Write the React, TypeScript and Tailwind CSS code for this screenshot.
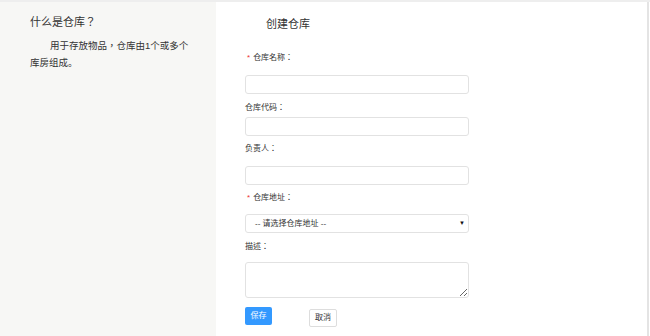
const font = { fontFamily: '"Liberation Sans", "Noto Sans CJK TC", "Noto Sans CJK SC", sans-serif' }

function Label({ text, required }: { text: string; required?: boolean }) {
  return (
    <div className="h-[12px] leading-[12px] text-[8px] text-[#333] flex items-center">
      {required && <span className="text-[#e33] text-[8px] pl-[2px] pr-[3px]">*</span>}
      <span>{text}</span>
    </div>
  )
}

export default function App() {
  return (
    <div style={font} className="w-[650px] h-[336px] bg-white border-t-2 border-[#eeeeee] flex overflow-hidden">
      <aside className="w-[216px] shrink-0 bg-[#f7f7f5] pl-[30px] pt-[12px]">
        <h2 className="text-[11px] leading-[16px] text-[#333]">什么是仓库？</h2>
        <p className="w-[160px] mt-[7px] text-[9.5px] leading-[17px] text-[#333] indent-[20px]">
          用于存放物品，仓库由1个或多个库房组成<span className="font-['Noto_Sans_CJK_SC']">。</span>
        </p>
      </aside>
      <main className="flex-1 pl-[29px] pt-[15px] mr-[1px] border-r-2 border-[#e4e4e4]">
        <h1 className="text-[11px] leading-[14px] text-[#333] pl-[21px]">创建仓库</h1>
        <form className="flex flex-col">
          <div className="mt-[21px]">
            <Label text="仓库名称：" required />
          </div>
          <input className="mt-[11px] w-[224px] h-[19px] border border-[#e2e2e2] rounded-[3px] outline-none" />
          <div className="mt-[8px]">
            <Label text="仓库代码：" />
          </div>
          <input className="mt-[3px] w-[224px] h-[19px] border border-[#e2e2e2] rounded-[3px] outline-none" />
          <div className="mt-[7px]">
            <Label text="负责人：" />
          </div>
          <input className="mt-[11px] w-[224px] h-[19px] border border-[#e2e2e2] rounded-[3px] outline-none" />
          <div className="mt-[7px]">
            <Label text="仓库地址：" required />
          </div>
          <div className="mt-[10px] w-[224px] h-[19px] border border-[#e2e2e2] rounded-[3px] flex items-center justify-between pl-[9px] pr-[3px] text-[8px] text-[#333]">
            <span>-- 请选择仓库地址 --</span>
            <span className="text-[6px] text-[#111]">▼</span>
          </div>
          <div className="mt-[8px]">
            <Label text="描述：" />
          </div>
          <textarea className="mt-[9px] w-[224px] h-[36px] border border-[#e2e2e2] rounded-[3px] outline-none block" />
          <div className="mt-[9px] flex items-start">
            <button type="button" className="w-[27px] h-[18px] bg-[#3399ff] rounded-[2px] text-white text-[8px] leading-[18px]">保存</button>
            <button type="button" className="ml-[37px] mt-[2px] w-[28px] h-[18px] bg-white border border-[#dddddd] rounded-[2px] text-[#333] text-[8px] leading-[16px]">取消</button>
          </div>
        </form>
      </main>
    </div>
  )
}
